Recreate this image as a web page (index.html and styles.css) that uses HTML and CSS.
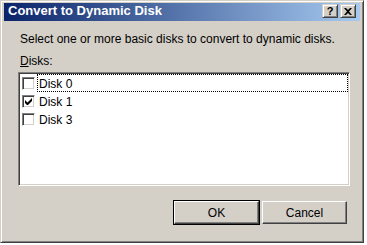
FILE: index.html
```html
<!DOCTYPE html>
<html>
<head>
<meta charset="utf-8">
<link rel="stylesheet" href="styles.css">
</head>
<body>
<div class="window">
  <div class="titlebar">
    <span class="title">Convert to Dynamic Disk</span>
    <div class="tbuttons">
      <span class="tbtn help">?</span>
      <span class="tbtn close"><svg width="8" height="7" viewBox="0 0 8 7"><path d="M0 0h2l2 2 2-2h2L5 3.5 8 7H6L4 5 2 7H0l3-3.5z" fill="#000"/></svg></span>
    </div>
  </div>
  <div class="content">
    <p class="intro">Select one or more basic disks to convert to dynamic disks.</p>
    <p class="label"><u>D</u>isks:</p>
    <div class="listbox">
      <div class="row">
        <span class="check"></span>
        <span class="item focus">Disk 0</span>
      </div>
      <div class="row">
        <span class="check"><svg width="7" height="7" viewBox="0 0 7 7"><path d="M0 2v3l2 2h1l4-4V0L2.5 4.5z" fill="#000"/></svg></span>
        <span class="item">Disk 1</span>
      </div>
      <div class="row">
        <span class="check"></span>
        <span class="item">Disk 3</span>
      </div>
    </div>
    <div class="buttons">
      <button class="btn default">OK</button>
      <button class="btn">Cancel</button>
    </div>
  </div>
</div>
</body>
</html>
```

FILE: styles.css
```css
html, body {
  margin: 0;
  padding: 0;
  background: #ffffff;
}
body {
  font-family: "Liberation Sans", Arial, sans-serif;
  font-size: 12px;
  color: #000;
}
.window {
  box-sizing: border-box;
  width: 364px;
  height: 243px;
  background: #d4d0c8;
  border: 1px solid;
  border-color: #d4d0c8 #404040 #404040 #d4d0c8;
  box-shadow: inset 1px 1px #ffffff, inset -1px -1px #808080;
  padding: 2px 3px 0 3px;
  display: flex;
  flex-direction: column;
}
.titlebar {
  height: 18px;
  background: linear-gradient(to right, #0a246a, #a6caf0);
  display: flex;
  align-items: flex-start;
  justify-content: space-between;
  padding-left: 4px;
}
.title {
  font-weight: bold;
  font-size: 13px;
  line-height: 16px;
  color: #ffffff;
}
.tbuttons {
  display: flex;
  gap: 2px;
  padding: 1px 4px 0 0;
}
.tbtn {
  box-sizing: border-box;
  width: 16px;
  height: 14px;
  background: #d4d0c8;
  border: 1px solid;
  border-color: #d4d0c8 #404040 #404040 #d4d0c8;
  box-shadow: inset 1px 1px #ffffff, inset -1px -1px #808080;
  display: flex;
  align-items: center;
  justify-content: center;
}
.help {
  font-weight: bold;
  font-size: 11px;
  line-height: 12px;
}
.content {
  padding: 0 11px 0 14px;
  display: flex;
  flex-direction: column;
}
.intro {
  margin: 11px 0 0 2px;
  line-height: 14px;
}
.label {
  margin: 8px 0 0 2px;
  line-height: 14px;
}
.label u {
  text-decoration-thickness: 1px;
}
.listbox {
  box-sizing: border-box;
  margin-top: 4px;
  width: 332px;
  height: 114px;
  background: #ffffff;
  border: 1px solid;
  border-color: #808080 #ffffff #ffffff #808080;
  box-shadow: inset 1px 1px #404040, inset -1px -1px #d4d0c8;
  padding: 1px 1px 1px 3px;
  display: flex;
  flex-direction: column;
}
.row {
  height: 18px;
  display: flex;
  align-items: center;
}
.check {
  box-sizing: border-box;
  width: 13px;
  height: 13px;
  background: #ffffff;
  border: 1px solid;
  border-color: #808080 #ffffff #ffffff #808080;
  box-shadow: inset 1px 1px #404040, inset -1px -1px #d4d0c8;
  display: flex;
  align-items: center;
  justify-content: center;
  margin-top: 1px;
}
.item {
  box-sizing: border-box;
  flex: 1;
  height: 18px;
  margin-left: 2px;
  padding: 1px 0 0 1px;
  line-height: 17px;
  border: 1px solid transparent;
}
.item.focus {
  border: 1px dotted #000000;
}
.buttons {
  display: flex;
  justify-content: flex-end;
  gap: 3px;
  margin-top: 15px;
  padding-right: 2px;
}
.btn {
  box-sizing: border-box;
  width: 85px;
  height: 23px;
  font-family: "Liberation Sans", Arial, sans-serif;
  font-size: 12px;
  color: #000;
  background: #d4d0c8;
  border: 1px solid;
  border-color: #ffffff #404040 #404040 #ffffff;
  box-shadow: inset -1px -1px #808080;
  padding: 0;
}
.btn.default {
  outline: 1px solid #000000;
}
```
